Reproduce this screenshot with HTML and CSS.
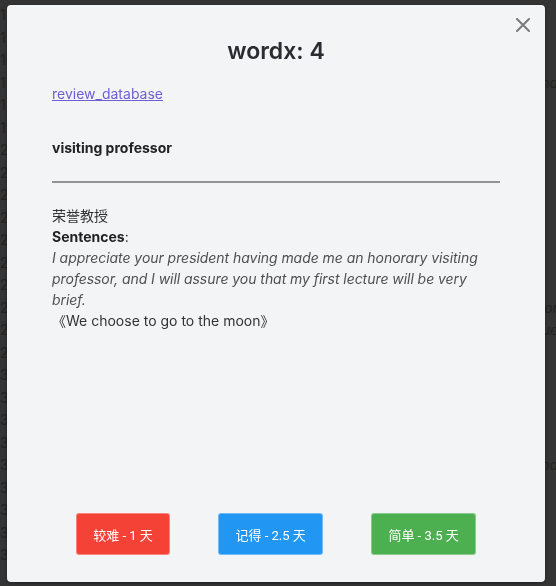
FILE: index.html
```html
<!DOCTYPE html>
<html lang="zh">
<head>
<meta charset="utf-8">
<title>wordx</title>
<link rel="stylesheet" href="styles.css">
</head>
<body>
<div class="page">
  <div class="row"><span class="num">14</span></div>
  <div class="row"><span class="num">15</span></div>
  <div class="row"><span class="num">16</span></div>
  <div class="row"><span class="num">17</span><span class="tail">nd</span></div>
  <div class="row"><span class="num">18</span></div>
  <div class="row"><span class="num">19</span></div>
  <div class="row"><span class="num">20</span></div>
  <div class="row"><span class="num">21</span></div>
  <div class="row"><span class="num">22</span></div>
  <div class="row"><span class="num">23</span></div>
  <div class="row"><span class="num">24</span></div>
  <div class="row"><span class="num">25</span></div>
  <div class="row"><span class="num">26</span></div>
  <div class="row"><span class="num">27</span><span class="tail">or</span></div>
  <div class="row"><span class="num">28</span><span class="tail">ue</span></div>
  <div class="row"><span class="num">29</span></div>
  <div class="row"><span class="num">30</span></div>
  <div class="row"><span class="num">31</span></div>
  <div class="row"><span class="num">32</span></div>
  <div class="row"><span class="num">33</span></div>
  <div class="row"><span class="num">34</span><span class="tail">nd</span></div>
  <div class="row"><span class="num">35</span></div>
  <div class="row"><span class="num">36</span></div>
  <div class="row"><span class="num">37</span></div>
  <div class="row last"><span class="num">38</span><span class="bottom">《We choose to go to the moon》</span></div>
</div>

<div class="overlay">
  <div class="modal">
    <button class="close" aria-label="close">
      <svg width="14" height="14" viewBox="0 0 14 14"><path d="M1 1 L13 13 M13 1 L1 13" stroke="#7a7a7a" stroke-width="2" stroke-linecap="round"/></svg>
    </button>
    <h2 class="title">wordx: 4</h2>
    <a class="link" href="#">review_database</a>
    <p class="word">visiting professor</p>
    <hr class="rule">
    <div class="detail">
      <div>荣誉教授</div>
      <div><b>Sentences</b>:</div>
      <div class="sentence">I appreciate your president having made me an honorary visiting professor, and I will assure you that my first lecture will be very brief.</div>
      <div>《We choose to go to the moon》</div>
    </div>
    <div class="actions">
      <button class="btn hard">较难 - 1 天</button>
      <button class="btn good">记得 - 2.5 天</button>
      <button class="btn easy">简单 - 3.5 天</button>
    </div>
  </div>
</div>
</body>
</html>
```

FILE: styles.css
```css
html, body {
  margin: 0;
  padding: 0;
}
body {
  background: #343434;
  font-family: Inter, "Noto Sans CJK SC", sans-serif;
  width: 556px;
  height: 586px;
  overflow: hidden;
}
.page {
  padding: 4px 0 0 0;
  color: #222;
  font-size: 14px;
  line-height: 22.5px;
}
.row {
  display: flex;
  justify-content: space-between;
  white-space: nowrap;
}
.num {
  width: 18px;
  flex: none;
}
.tail {
  font-style: italic;
  margin-right: -2px;
}
.bottom {
  font-style: italic;
  margin-right: auto;
  margin-left: 30px;
}
.overlay {
  position: fixed;
  inset: 0;
  padding: 5px 11px 4px 7px;
  box-sizing: border-box;
  display: flex;
}
.modal {
  position: relative;
  flex: 1;
  background: #f3f4f6;
  border-radius: 4px;
  box-shadow: 0 1px 3px rgba(0,0,0,0.4);
  padding: 24px 45px 27px 45px;
  display: flex;
  flex-direction: column;
  color: #333;
  font-size: 14px;
}
.close {
  position: absolute;
  top: 13px;
  right: 15px;
  border: 0;
  background: none;
  padding: 0;
  width: 14px;
  height: 14px;
  display: flex;
}
.title {
  margin: 8px 0 0 0;
  text-align: center;
  font-size: 23px;
  font-weight: 600;
  color: #2a2c31;
  line-height: 28px;
}
.link {
  margin-top: 20px;
  align-self: flex-start;
  color: #6c5fd6;
  line-height: 18px;
}
.word {
  margin: 36px 0 0 0;
  font-weight: 700;
  color: #222;
  line-height: 18px;
}
.rule {
  margin: 24px 0 0 0;
  border: 0;
  height: 2px;
  background: #939393;
}
.detail {
  margin-top: 22px;
  line-height: 21px;
  color: #333;
}
.detail b {
  color: #222;
}
.sentence {
  font-style: italic;
  color: #505050;
  letter-spacing: -0.05px;
}
.actions {
  margin-top: auto;
  display: flex;
  justify-content: space-around;
}
.btn {
  height: 42px;
  padding: 0 16px;
  border: 1px solid rgba(255,255,255,0.35);
  border-radius: 3px;
  color: #fff;
  font-family: Roboto, "Noto Sans CJK SC", sans-serif;
  font-size: 13px;
}
.hard { background: #f44336; }
.good { background: #2196f3; }
.easy { background: #4caf50; }
```
